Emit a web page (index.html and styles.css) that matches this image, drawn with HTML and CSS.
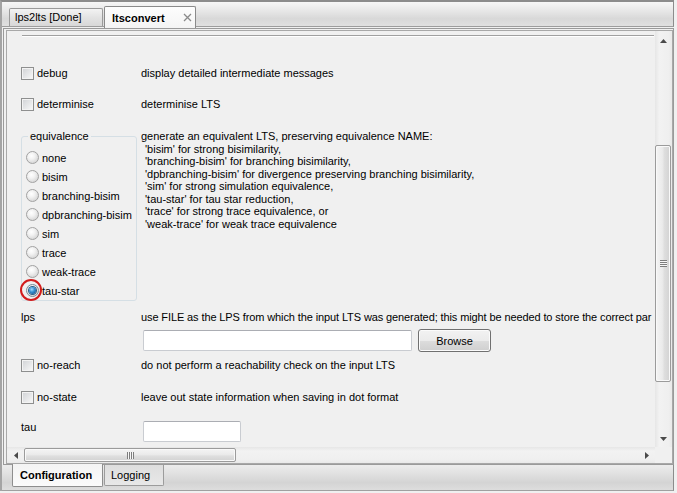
FILE: index.html
```html
<!DOCTYPE html>
<html>
<head>
<meta charset="utf-8">
<title>ltsconvert</title>
<link rel="stylesheet" href="styles.css">
</head>
<body>
<div class="app">
  <div class="tabbar-top">
    <div class="ttab">lps2lts [Done]</div>
    <div class="ttab ttab-active">
      <span class="ttab-label">ltsconvert</span>
      <svg class="close" width="9" height="9" viewBox="0 0 9 9"><path d="M1 1L8 8M8 1L1 8" stroke="#8a8a8a" stroke-width="1.3" fill="none"/></svg>
    </div>
  </div>
  <div class="pane">
    <div class="scroller">
      <div class="viewport">
        <div class="content">
          <div class="sep"></div>

          <div class="row row-debug">
            <div class="opt"><span class="cb"></span>debug</div>
            <div class="desc">display detailed intermediate messages</div>
          </div>

          <div class="row row-det">
            <div class="opt"><span class="cb"></span>determinise</div>
            <div class="desc">determinise LTS</div>
          </div>

          <div class="row-equiv">
            <fieldset class="group">
              <legend>equivalence</legend>
              <div class="radio"><span class="rb"></span>none</div>
              <div class="radio"><span class="rb"></span>bisim</div>
              <div class="radio"><span class="rb"></span>branching-bisim</div>
              <div class="radio"><span class="rb"></span>dpbranching-bisim</div>
              <div class="radio"><span class="rb"></span>sim</div>
              <div class="radio"><span class="rb"></span>trace</div>
              <div class="radio"><span class="rb"></span>weak-trace</div>
              <div class="radio"><span class="rb rb-on"><span class="dot"></span><span class="ring"></span></span>tau-star</div>
            </fieldset>
            <div class="desc desc-multi">
              <div>generate an equivalent LTS, preserving equivalence NAME:</div>
              <div class="ind">'bisim' for strong bisimilarity,</div>
              <div class="ind">'branching-bisim' for branching bisimilarity,</div>
              <div class="ind">'dpbranching-bisim' for divergence preserving branching bisimilarity,</div>
              <div class="ind">'sim' for strong simulation equivalence,</div>
              <div class="ind">'tau-star' for tau star reduction,</div>
              <div class="ind">'trace' for strong trace equivalence, or</div>
              <div class="ind">'weak-trace' for weak trace equivalence</div>
            </div>
          </div>

          <div class="row row-lps">
            <div class="opt">lps</div>
            <div class="desc long">use FILE as the LPS from which the input LTS was generated; this might be needed to store the correct par</div>
          </div>
          <div class="row-file">
            <div class="spacer"></div>
            <div class="fileline">
              <div class="textbox tb-file"></div>
              <div class="btn">Browse</div>
            </div>
          </div>

          <div class="row row-reach">
            <div class="opt"><span class="cb"></span>no-reach</div>
            <div class="desc">do not perform a reachability check on the input LTS</div>
          </div>

          <div class="row row-state">
            <div class="opt"><span class="cb"></span>no-state</div>
            <div class="desc">leave out state information when saving in dot format</div>
          </div>

          <div class="row-tau">
            <div class="opt-top">tau</div>
            <div class="tauline"><div class="textbox tb-tau"></div></div>
          </div>
        </div>
      </div>

      <div class="vscroll">
        <div class="sbtn sbtn-up"><svg width="7" height="4" viewBox="0 0 7 4"><path d="M0 4L3.5 0L7 4Z" fill="#4a4a4a"/></svg></div>
        <div class="vtrack">
          <div class="vthumb"><span class="vgrip"></span></div>
        </div>
        <div class="sbtn sbtn-down"><svg width="7" height="4" viewBox="0 0 7 4"><path d="M0 0L7 0L3.5 4Z" fill="#4a4a4a"/></svg></div>
      </div>

      <div class="hscroll">
        <div class="hbtn"><svg width="4" height="7" viewBox="0 0 4 7"><path d="M4 0L4 7L0 3.5Z" fill="#4a4a4a"/></svg></div>
        <div class="hthumb"><span class="hgrip"></span></div>
        <div class="hspace"></div>
        <div class="hbtn"><svg width="4" height="7" viewBox="0 0 4 7"><path d="M0 0L4 3.5L0 7Z" fill="#4a4a4a"/></svg></div>
      </div>
      <div class="corner"></div>
    </div>
  </div>
  <div class="tabbar-bottom">
    <div class="btab btab-active">Configuration</div>
    <div class="btab">Logging</div>
  </div>
</div>
</body>
</html>
```

FILE: styles.css
```css
* { box-sizing: border-box; }
html, body { margin: 0; padding: 0; }
body {
  width: 677px;
  height: 493px;
  overflow: hidden;
  background: #f0f0f0;
  font-family: "Liberation Sans", Arial, sans-serif;
  font-size: 11px;
  color: #000;
}

.app {
  width: 674px;
  height: 491px;
  border-top: 2px solid #8c8c8c;
  border-left: 2px solid #a4a4a4;
  display: flex;
  flex-direction: column;
  background: #f0f0f0;
}

/* top tabs */
.tabbar-top {
  flex: none;
  height: 25px;
  border-bottom: 1px solid #9d9d9d;
  border-right: 1px solid #8c8c8c;
  background: linear-gradient(#f7f7f7, #e8e8e8 35%, #d8d8d8 70%, #e0e0e0);
  display: flex;
  align-items: flex-end;
  padding-left: 7px;
  gap: 1px;
}
.ttab {
  width: 94px;
  height: 18px;
  padding-left: 5px;
  border: 1px solid #9a9a9a;
  border-bottom: none;
  border-radius: 2px 2px 0 0;
  background: linear-gradient(#f3f3f3, #e3e3e3 50%, #d8d8d8);
  line-height: 16px;
  white-space: nowrap;
}
.ttab-active {
  width: 92px;
  height: 22px;
  margin-bottom: -2px;
  padding-left: 7px;
  border-color: #8a8a8a;
  background: linear-gradient(#fdfdfd, #f4f4f4);
  font-weight: bold;
  display: flex;
  align-items: center;
  line-height: 14px;
}
.close { margin-left: auto; margin-right: 3px; }

/* pane */
.pane {
  flex: none;
  height: 437px;
  margin: 1px 0 0 1px;
  border: 1px solid #9a9a9a;
  padding: 1px 0 0 2px;
}
.scroller {
  height: 434px;
  border: 1px solid #a8a8a8;
  display: grid;
  grid-template-columns: 648px 17px;
  grid-template-rows: 416px 16px;
  background: #f0f0f0;
}
.viewport {
  grid-column: 1;
  grid-row: 1;
  overflow: hidden;
  background: #f0f0f0;
}
.content { padding: 4px 0 0 14px; }
.sep {
  height: 2px;
  margin: 0 1px;
  border-top: 1px solid #a0a0a0;
  border-bottom: 1px solid #ffffff;
}

.row {
  display: grid;
  grid-template-columns: 120px 1fr;
  align-items: center;
  height: 18px;
}
.opt { display: flex; align-items: center; white-space: nowrap; }
.desc { white-space: nowrap; }
.long { letter-spacing: -0.11px; }

.row-debug { margin-top: 27px; }
.row-det { margin-top: 13px; }
.row-equiv {
  margin-top: 16px;
  display: grid;
  grid-template-columns: 120px 1fr;
  align-items: start;
}
.row-lps { margin-top: 7px; }
.row-file {
  margin-top: 3px;
  display: grid;
  grid-template-columns: 120px 1fr;
  height: 23px;
}
.row-reach { margin-top: 4px; }
.row-state { margin-top: 14px; }
.row-tau {
  margin-top: 15px;
  display: grid;
  grid-template-columns: 120px 1fr;
  align-items: start;
}
.opt-top { line-height: 13px; }

/* checkbox */
.cb {
  width: 13px;
  height: 13px;
  flex: none;
  margin-right: 3px;
  border: 1px solid #8e8f8f;
  background: linear-gradient(135deg, #d0d2d5, #f9f9f9);
  box-shadow: inset 0 0 0 1px #f3f3f3;
}

/* group box */
.group {
  width: 116px;
  min-width: 0;
  margin: 0;
  padding: 5px 0 0 4px;
  border: 1px solid #d5dfe5;
  border-radius: 3px;
}
.group legend {
  padding: 0 2px;
  margin-left: 2px;
  line-height: 14px;
}
.radio {
  height: 19px;
  display: flex;
  align-items: center;
  white-space: nowrap;
}
.rb {
  width: 13px;
  height: 13px;
  flex: none;
  margin-right: 3px;
  border-radius: 50%;
  border: 1px solid #a2a2a2;
  background: radial-gradient(circle at 40% 35%, #ffffff 0, #f2f2f2 35%, #d2d2d2 85%);
}
.rb-on {
  position: relative;
  border-color: #7b8a96;
  display: flex;
  align-items: center;
  justify-content: center;
}
.dot {
  width: 7px;
  height: 7px;
  border-radius: 50%;
  background: radial-gradient(circle at 40% 35%, #a8dcff 0, #3a94d3 40%, #0b4e8c 90%);
  box-shadow: 0 0 0 1px #2a5f86;
}
.ring {
  position: absolute;
  left: -7px;
  top: -6px;
  width: 22px;
  height: 22px;
  border: 2px solid #d21c1c;
  border-radius: 50%;
}

.desc-multi {
  line-height: 12.5px;
  padding-top: 1px;
}
.ind { padding-left: 4px; }

/* inputs */
.fileline { display: flex; align-items: center; }
.textbox {
  height: 21px;
  margin-left: 2px;
  background: #ffffff;
  border: 1px solid #c9ccd1;
  border-top-color: #abadb3;
  border-radius: 2px;
}
.tb-file { width: 269px; }
.tb-tau { width: 98px; }
.btn {
  width: 73px;
  height: 23px;
  margin-left: 6px;
  border: 1px solid #707070;
  border-radius: 3px;
  background: linear-gradient(#f2f2f2 0%, #ebebeb 50%, #dddddd 51%, #cfcfcf 100%);
  box-shadow: inset 0 0 0 1px #fbfbfb;
  display: flex;
  align-items: center;
  justify-content: center;
}

/* scrollbars */
.vscroll {
  grid-column: 2;
  grid-row: 1;
  display: flex;
  flex-direction: column;
  background: linear-gradient(90deg, #e6e6e6, #f2f2f2 25%, #efefef 80%, #e9e9e9);
}
.sbtn {
  height: 17px;
  flex: none;
  display: flex;
  justify-content: center;
  align-items: center;
}
.sbtn-up { padding-top: 3px; }
.vtrack {
  flex: 1;
  padding-top: 97px;
}
.vthumb {
  height: 237px;
  width: 16px;
  border: 1px solid #9b9b9b;
  border-radius: 2px;
  background: linear-gradient(90deg, #f4f4f4, #ebebeb 45%, #dedede 60%, #d2d2d2);
  box-shadow: inset 0 0 0 1px #f9f9f9;
  display: flex;
  align-items: center;
  justify-content: center;
}
.vgrip {
  width: 7px;
  height: 7px;
  background: repeating-linear-gradient(#7d7d7d 0 1px, #f6f6f6 1px 2px);
}
.hscroll {
  grid-column: 1;
  grid-row: 2;
  display: flex;
  background: linear-gradient(#e6e6e6, #f2f2f2 25%, #efefef 80%, #e9e9e9);
}
.hbtn {
  width: 17px;
  flex: none;
  display: flex;
  align-items: center;
  justify-content: center;
}
.hthumb {
  width: 212px;
  flex: none;
  margin: 1px 0;
  border: 1px solid #9b9b9b;
  border-radius: 2px;
  background: linear-gradient(#f4f4f4, #ebebeb 45%, #dedede 60%, #d2d2d2);
  box-shadow: inset 0 0 0 1px #f9f9f9;
  display: flex;
  align-items: center;
  justify-content: center;
}
.hgrip {
  width: 7px;
  height: 7px;
  background: repeating-linear-gradient(90deg, #7d7d7d 0 1px, #f6f6f6 1px 2px);
}
.hspace { flex: 1; }
.corner {
  grid-column: 2;
  grid-row: 2;
  background: #f0f0f0;
}

/* bottom tabs */
.tabbar-bottom {
  flex: none;
  height: 26px;
  border-bottom: 1px solid #a0a0a0;
  border-right: 1px solid #8c8c8c;
  background: linear-gradient(#ececec, #dfdfdf 40%, #d4d4d4 70%, #dddddd);
  display: flex;
  align-items: flex-start;
  padding-left: 10px;
  gap: 1px;
}
.btab {
  width: 60px;
  height: 21px;
  padding-left: 6px;
  border: 1px solid #9c9c9c;
  border-top: none;
  border-radius: 0 0 2px 2px;
  background: linear-gradient(#dedede, #e8e8e8);
  line-height: 20px;
  white-space: nowrap;
}
.btab-active {
  width: 91px;
  height: 23px;
  margin-top: -1px;
  padding-left: 7px;
  border-color: #8e8e8e;
  background: linear-gradient(#f3f3f3, #fbfbfb);
  font-weight: bold;
  line-height: 22px;
}
```
